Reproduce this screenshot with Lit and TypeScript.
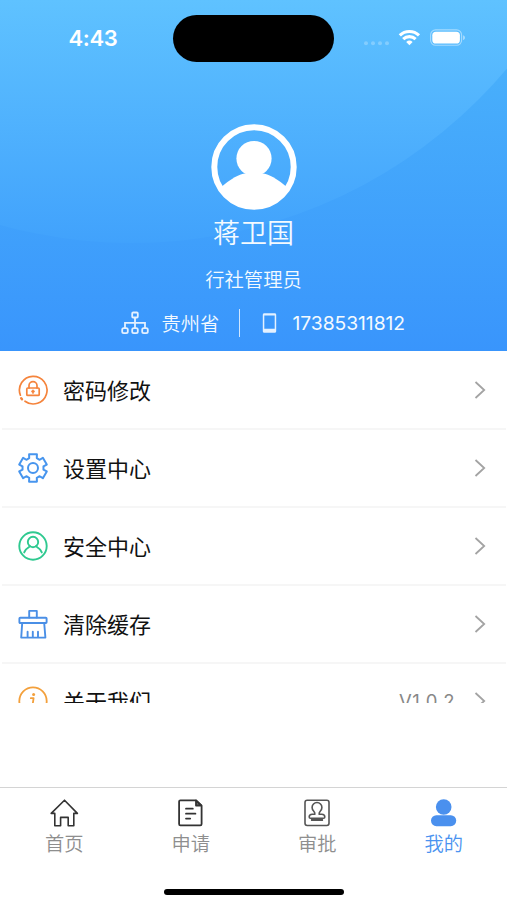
import { LitElement, html, svg, css, nothing } from "lit";
import { customElement, property, state } from "lit/decorators.js";
import { classMap } from "lit/directives/class-map.js";

/** Outline of a six-toothed cog centred in a 32-unit box. */
function cogPath(outer: number, inner: number): string {
  const points: string[] = [];
  for (let tooth = 0; tooth < 6; tooth++) {
    const mid = -90 + tooth * 60;
    const corners: [number, number][] = [[inner, -21], [outer, -16], [outer, 16], [inner, 21]];
    for (const [radius, offset] of corners) {
      const a = ((mid + offset) * Math.PI) / 180;
      points.push(`${(16 + radius * Math.cos(a)).toFixed(2)} ${(16 + radius * Math.sin(a)).toFixed(2)}`);
    }
  }
  return `M${points.join("L")}Z`;
}

const icons = {
  lock: svg`<g stroke="#f5843c" stroke-width="1.7">
    <path d="M8 27.2A13.8 13.8 0 1 0 3.4 21.2"/><path d="M4.2 24.2l.8 1" stroke-width="2.4"/>
    <rect x="9.8" y="14" width="12.4" height="7.4" rx="1"/>
    <path d="M12 14v-2.4a4 4 0 0 1 8 0V14M16 16.4v2.6M15 17.4h2"/></g>`,
  gear: svg`<g stroke="#4795ee" stroke-width="2">
    <path d=${cogPath(14.2, 10.6)}/><circle cx="16" cy="16" r="5"/></g>`,
  user: svg`<g stroke="#2fc990" stroke-width="1.9"><circle cx="16" cy="16" r="13.7"/>
    <circle cx="16" cy="12" r="5.2"/><path d="M7.2 22.4c1.2-3 3.2-4.6 5.8-6.2M24.8 22.4c-1.2-3-3.2-4.6-5.8-6.2"/></g>`,
  brush: svg`<g stroke="#4a8fe6" stroke-width="1.9"><path d="M12.2 9.6V2.9h7.6v6.7"/>
    <rect x="2.4" y="9.8" width="27.2" height="5.2" rx=".8"/>
    <path d="M5.2 15L4.2 29.6h24.2L27.2 15M10.6 29v-5.2M15.8 29v-5.2M21 29v-5.2"/></g>`,
  info: svg`<g stroke="#f3a03c" stroke-width="1.8"><circle cx="16" cy="16" r="13.7"/>
    <path d="M13.8 13.2h2.8l-1.4 9.2h2.6"/></g><circle cx="16.6" cy="9.6" r="1.5" fill="#f3a03c"/>`,
  home: svg`<path stroke="#333" stroke-width="1.6" d="M2.2 15.4 15.5 2.2l12.9 13.2h-3.6v12.3h-5.6v-8.3h-7.6v8.3H5.8V15.4z"/>`,
  doc: svg`<g stroke="#333" stroke-width="1.8"><path d="M4.4 2.3h15.6l5.6 5.4v18.4c0 .8-.5 1.3-1.3 1.3H4.4c-.8 0-1.3-.5-1.3-1.3V3.6c0-.8.5-1.3 1.3-1.3z"/>
    <path d="M20 2.5v5h5.2z" fill="#777"/><path d="M10 10.7h6.8M10 15.7h9.4M10 20.6h4.2"/></g>`,
  stamp: svg`<g stroke="#555" stroke-width="1.6"><rect x="3" y="2.3" width="24" height="25.2" rx="2.2"/>
    <path d="M12.8 16.2c.4-1.6-.4-2.2-1.2-3.2a4.9 4.9 0 1 1 6.8 0c-.8 1-1.6 1.600-1.200 3.200h2.6c2.100 0 3 1.200 3 2.700 0 .8-.4 1.300-1.300 1.300H8.500c-.9 0-1.300-.5-1.300-1.300 0-1.500.9-2.700 3-2.700z"/><path d="M10 21.900h10" stroke-width="2.400"/></g>`,
  mine: svg`<g fill="#4a90ee"><circle cx="14.7" cy="9" r="7.8"/><rect x="2" y="17.2" width="25.2" height="11" rx="5.4"/></g>`,
};

type IconName = keyof typeof icons;

@customElement("line-icon")
export class LineIcon extends LitElement {
  @property() name: IconName = "home";
  @property({ type: Number }) box = 32;

  static styles = css`
    :host { display: block; width: 32px; height: 32px; }
    svg { display: block; width: 100%; height: 100%; fill: none; stroke-linejoin: round; stroke-linecap: round; }
  `;

  render() {
    return html`<svg viewBox="0 0 ${this.box} ${this.box}">${icons[this.name]}</svg>`;
  }
}

@customElement("menu-row")
export class MenuRow extends LitElement {
  @property() icon: IconName = "lock";
  @property() label = "";
  @property() value = "";

  static styles = css`
    :host { display: flex; align-items: center; flex: none; box-sizing: border-box; height: 77.75px;
      margin: 0 1px 0 2px; padding: 0 20px 0 14.5px; border-bottom: 2px solid #f6f6f6; }
    .label { margin-left: 14.5px; padding-bottom: 2px; flex: 1; font-size: 22px; color: #111; }
    .value { font-size: 18.5px; letter-spacing: 0.5px; color: #888; margin-right: 19px; padding-bottom: 1px; }
    .chevron { width: 12px; height: 20px; fill: none; stroke: #a3a3a3; stroke-width: 1.8; }
  `;

  render() {
    return html`<line-icon name=${this.icon}></line-icon>
      <span class="label">${this.label}</span>
      ${this.value ? html`<span class="value">${this.value}</span>` : nothing}
      <svg class="chevron" viewBox="0 0 12 20"><path d="M1.5 2l8.7 8-8.7 8"/></svg>`;
  }
}

@customElement("profile-header")
export class ProfileHeader extends LitElement {
  static styles = css`
    :host { position: relative; display: flex; flex-direction: column; align-items: center; flex: none;
      height: 350.5px; overflow: hidden; color: #f4faff; }
    .backdrop { position: absolute; inset: 0; width: 507px; height: 351px; }
    .status, .avatar, .name, .role, .facts { position: relative; }
    .status { display: grid; grid-template-columns: 173px 161px 1fr; align-items: center; width: 100%; height: 76px; color: #fff; }
    .time { padding-left: 13px; text-align: center; font: 600 22px/1 Inter, sans-serif; letter-spacing: -0.3px; }
    .island { height: 47px; border-radius: 24px; background: #000; }
    .signals { display: flex; align-items: center; padding-left: 29px; }
    .signals svg { display: block; width: 104px; height: 20px; }
    .avatar { width: 86px; height: 86px; margin-top: 47.5px; }
    .name { font-size: 27px; line-height: 36px; margin-top: 6px; font-weight: 350; }
    .role { font-size: 19.3px; line-height: 26px; margin-top: 15px; font-weight: 350; }
    .facts { display: flex; align-items: center; align-self: flex-start; margin: 15px 0 0 120.5px; height: 30px;
      font-size: 19.3px; font-weight: 350; }
    .org { width: 28px; height: 24px; margin-right: 13px; }
    .rule { width: 1.6px; height: 28px; margin: 0 22px 0 19.5px; background: #cfe6ff; }
    .phone { width: 15px; height: 20px; margin-right: 15px; }
    .number { font-family: Inter, sans-serif; font-size: 19.3px; font-weight: 400; letter-spacing: -0.05px; }
  `;

  render() {
    return html`
      <svg class="backdrop" viewBox="0 0 507 351" preserveAspectRatio="none">
        <defs>
          <linearGradient id="deep" x1="0" y1="60" x2="0" y2="351" gradientUnits="userSpaceOnUse">
            <stop offset="0" stop-color="#49b0fb"/><stop offset="1" stop-color="#3995fc"/>
          </linearGradient>
          <linearGradient id="light" x1="0" y1="0" x2="0" y2="250" gradientUnits="userSpaceOnUse">
            <stop offset="0" stop-color="#5fc2ff"/><stop offset="1" stop-color="#40a1fc"/>
          </linearGradient>
        </defs>
        <rect width="507" height="351" fill="url(#deep)"/>
        <circle cx="132" cy="-247" r="490" fill="url(#light)"/>
      </svg>
      <div class="status">
        <span class="time">4:43</span>
        <div class="island"></div>
        <div class="signals">
          <svg viewBox="0 0 104 20" fill="none">
            <g fill="#fff" fill-opacity=".25"><circle cx="3" cy="15.2" r="2"/><circle cx="10" cy="15.2" r="2"/><circle cx="17" cy="15.2" r="2"/><circle cx="24" cy="15.2" r="2"/></g>
            <g stroke="#fff" stroke-width="3.2"><path d="M36.8 7.3a14 14 0 0 1 19.2 0"/><path d="M40.2 11.2a9 9 0 0 1 12.4 0"/></g>
            <path d="M46.4 17.3l-3.2-3.3a4.7 4.7 0 0 1 6.4 0z" fill="#fff"/>
            <rect x="67.6" y="1.9" width="31" height="15.4" rx="5" stroke="#fff" stroke-opacity=".45" stroke-width="1.1"/>
            <rect x="69.3" y="3.7" width="27.6" height="11.8" rx="3.6" fill="#fff"/>
            <path d="M100.2 7.2c2.2.8 2.2 4 0 4.8z" fill="#fff" fill-opacity=".55"/>
          </svg>
        </div>
      </div>
      <svg class="avatar" viewBox="0 0 86 86">
        <defs><clipPath id="disc"><circle cx="43" cy="43" r="42"/></clipPath></defs>
        <circle cx="43" cy="43" r="39.7" fill="none" stroke="#fff" stroke-width="6"/>
        <g clip-path="url(#disc)" fill="#fff"><circle cx="43" cy="34.5" r="17.6"/>
          <path d="M8 65C20 54 29 50 34.5 49.5h17C57 50 66 54 78 65v21H8z"/></g>
      </svg>
      <div class="name">蒋卫国</div>
      <div class="role">行社管理员</div>
      <div class="facts">
        <svg class="org" viewBox="0 0 28 24" fill="none" stroke="#e4f1ff" stroke-width="1.8">
          <rect x="11.2" y="1.5" width="5.6" height="5" rx="1"/><path d="M14 6.5v10.6M4 17v-5.2h20V17"/>
          <rect x="1.2" y="17.1" width="5.6" height="5" rx="1.6"/><rect x="11.2" y="17.1" width="5.6" height="5" rx="1.6"/><rect x="21.2" y="17.1" width="5.6" height="5" rx="1.6"/>
        </svg>
        <span>贵州省</span>
        <i class="rule"></i>
        <svg class="phone" viewBox="0 0 15 20"><path fill="#e4f1ff" fill-rule="evenodd" d="M2.3.3h10.4c.9 0 1.5.6 1.5 1.5v16.4c0 .9-.6 1.5-1.5 1.5H2.3c-.9 0-1.5-.6-1.5-1.5V1.8C.8.9 1.4.3 2.3.3zM2.3 2.5v13.3h10.4V2.5z"/></svg>
        <span class="number">17385311812</span>
      </div>`;
  }
}

@customElement("app-root")
export class AppRoot extends LitElement {
  @state() private active = "我的";

  private rows: { icon: IconName; label: string; value?: string }[] = [
    { icon: "lock", label: "密码修改" },
    { icon: "gear", label: "设置中心" },
    { icon: "user", label: "安全中心" },
    { icon: "brush", label: "清除缓存" },
    { icon: "info", label: "关于我们", value: "V1.0.2" },
  ];

  private tabs: { icon: IconName; label: string }[] = [
    { icon: "home", label: "首页" },
    { icon: "doc", label: "申请" },
    { icon: "stamp", label: "审批" },
    { icon: "mine", label: "我的" },
  ];

  static styles = css`
    :host { display: flex; flex-direction: column; width: 507px; height: 900px; overflow: hidden; background: #fff;
      font-family: Inter, "Noto Sans CJK SC", sans-serif; }
    .menu { display: flex; flex-direction: column; flex: none; box-sizing: border-box; height: 352.5px; padding-top: 2px; overflow: hidden; }
    .tabs { display: grid; grid-template-columns: repeat(4, 1fr); flex: none; box-sizing: border-box;
      height: 87px; margin-top: auto; border-top: 1.6px solid #d4d4d4; padding: 9.5px 0 0 1px; }
    .tab { display: flex; flex-direction: column; align-items: center; color: #8e8e8e; font-size: 19.3px;
      line-height: 28px; font-weight: 350; cursor: pointer; }
    .tab line-icon { width: 30px; height: 30px; }
    .tab span { margin-top: 2.5px; }
    .tab.active { color: #4a93f0; }
    .home-bar { flex: none; align-self: center; width: 180px; height: 6px; margin: 15px 0 5px; border-radius: 3px; background: #000; }
  `;

  render() {
    return html`
      <profile-header></profile-header>
      <div class="menu">
        ${this.rows.map((r) => html`<menu-row icon=${r.icon} label=${r.label} value=${r.value ?? ""}></menu-row>`)}
      </div>
      <nav class="tabs">
        ${this.tabs.map((t) => html`
          <div class=${classMap({ tab: true, active: t.label === this.active })} @click=${() => (this.active = t.label)}>
            <line-icon name=${t.icon} box="30"></line-icon><span>${t.label}</span>
          </div>`)}
      </nav>
      <div class="home-bar"></div>`;
  }
}
